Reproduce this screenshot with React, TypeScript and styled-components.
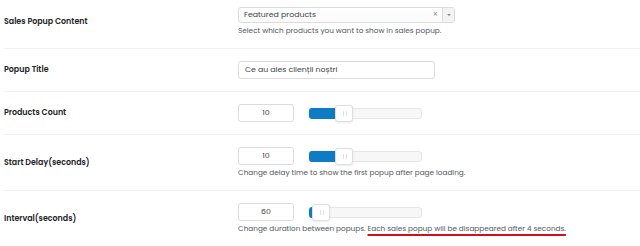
import React from 'react';
import styled, { createGlobalStyle } from 'styled-components';

const GlobalStyle = createGlobalStyle`
  body {
    margin: 0;
    background: #ffffff;
    font-family: Poppins, "Open Sans", "Noto Sans", sans-serif;
  }
`;

const FormTable = styled.div`
  margin: -5px 0 0 4px;
`;

const Row = styled.div`
  display: grid;
  grid-template-columns: 234px 1fr;
  align-items: center;
  padding: 12px 0;
  border-bottom: 1px solid #f0f0f1;
`;

const Label = styled.div`
  font-size: 7.9px;
  font-weight: 600;
  color: #1d2327;
`;

const Field = styled.div`
  display: flex;
  flex-direction: column;
`;

const Controls = styled.div`
  display: flex;
  align-items: center;
  gap: 15px;
`;

const Help = styled.p`
  margin: 2px 0 0;
  font-size: 7.3px;
  line-height: 11px;
  color: #50575e;
`;

const Marked = styled.span`
  text-decoration: underline;
  text-decoration-color: #d0101c;
  text-decoration-thickness: 2px;
  text-underline-offset: 3px;
`;

const SelectBox = styled.div`
  display: flex;
  align-items: stretch;
  width: 217px;
  height: 16px;
  box-sizing: border-box;
  border: 1px solid #dcdcde;
  border-radius: 3px;
  background: linear-gradient(#ffffff, #fafafa);
`;

const SelectValue = styled.span`
  flex: 1;
  display: flex;
  align-items: center;
  padding-left: 5px;
  font-size: 7.8px;
  color: #3c434a;
`;

const ClearMark = styled.span`
  display: flex;
  align-items: center;
  padding: 0 4px;
  font-size: 8px;
  color: #8c8f94;
`;

const Arrow = styled.span`
  display: flex;
  align-items: center;
  justify-content: center;
  width: 11px;
  border-left: 1px solid #dcdcde;
  background: #f3f3f3;
  &::after {
    content: '';
    border-left: 2px solid transparent;
    border-right: 2px solid transparent;
    border-top: 2px solid #888;
  }
`;

const TextInput = styled.input`
  width: 197px;
  height: 18px;
  box-sizing: border-box;
  padding: 0 6px;
  border: 1px solid #dcdcde;
  border-radius: 3px;
  font-family: inherit;
  font-size: 7.8px;
  color: #3c434a;
  outline: none;
`;

const NumberInput = styled(TextInput)`
  width: 56px;
  text-align: center;
`;

const Track = styled.div`
  position: relative;
  width: 113px;
  height: 11px;
  box-sizing: border-box;
  border: 1px solid #e6e6e6;
  border-radius: 3px;
  background: #f7f7f7;
`;

const Fill = styled.div`
  position: absolute;
  left: -1px;
  top: -1px;
  bottom: -1px;
  border-radius: 3px 0 0 3px;
  background: #0e7cc4;
`;

const Thumb = styled.div`
  position: absolute;
  top: -4px;
  width: 18px;
  height: 17px;
  box-sizing: border-box;
  border: 1px solid #dedede;
  border-radius: 3px;
  background: #fff;
  box-shadow: 0 1px 2px rgba(0, 0, 0, 0.08);
  &::after {
    content: '';
    position: absolute;
    left: 7px;
    top: 5px;
    width: 2px;
    height: 5px;
    border-left: 1px solid #e2e2e2;
    border-right: 1px solid #e2e2e2;
  }
`;

const Slider = ({ left }: { left: number }) => (
  <Track>
    <Fill style={{ width: left + 2 }} />
    <Thumb style={{ left }} />
  </Track>
);

export default function App() {
  return (
    <>
      <GlobalStyle />
      <FormTable>
        <Row>
          <Label>Sales Popup Content</Label>
          <Field>
            <SelectBox>
              <SelectValue>Featured products</SelectValue>
              <ClearMark>×</ClearMark>
              <Arrow />
            </SelectBox>
            <Help>Select which products you want to show in sales popup.</Help>
          </Field>
        </Row>
        <Row>
          <Label>Popup Title</Label>
          <Field>
            <TextInput defaultValue="Ce au ales clienții noștri" />
          </Field>
        </Row>
        <Row>
          <Label>Products Count</Label>
          <Field>
            <Controls>
              <NumberInput defaultValue="10" />
              <Slider left={25} />
            </Controls>
          </Field>
        </Row>
        <Row>
          <Label>Start Delay(seconds)</Label>
          <Field>
            <Controls>
              <NumberInput defaultValue="10" />
              <Slider left={25} />
            </Controls>
            <Help>Change delay time to show the first popup after page loading.</Help>
          </Field>
        </Row>
        <Row>
          <Label>Interval(seconds)</Label>
          <Field>
            <Controls>
              <NumberInput defaultValue="60" />
              <Slider left={2} />
            </Controls>
            <Help>
              Change duration between popups.{' '}
              <Marked>Each sales popup will be disappeared after 4 seconds.</Marked>
            </Help>
          </Field>
        </Row>
      </FormTable>
    </>
  );
}
